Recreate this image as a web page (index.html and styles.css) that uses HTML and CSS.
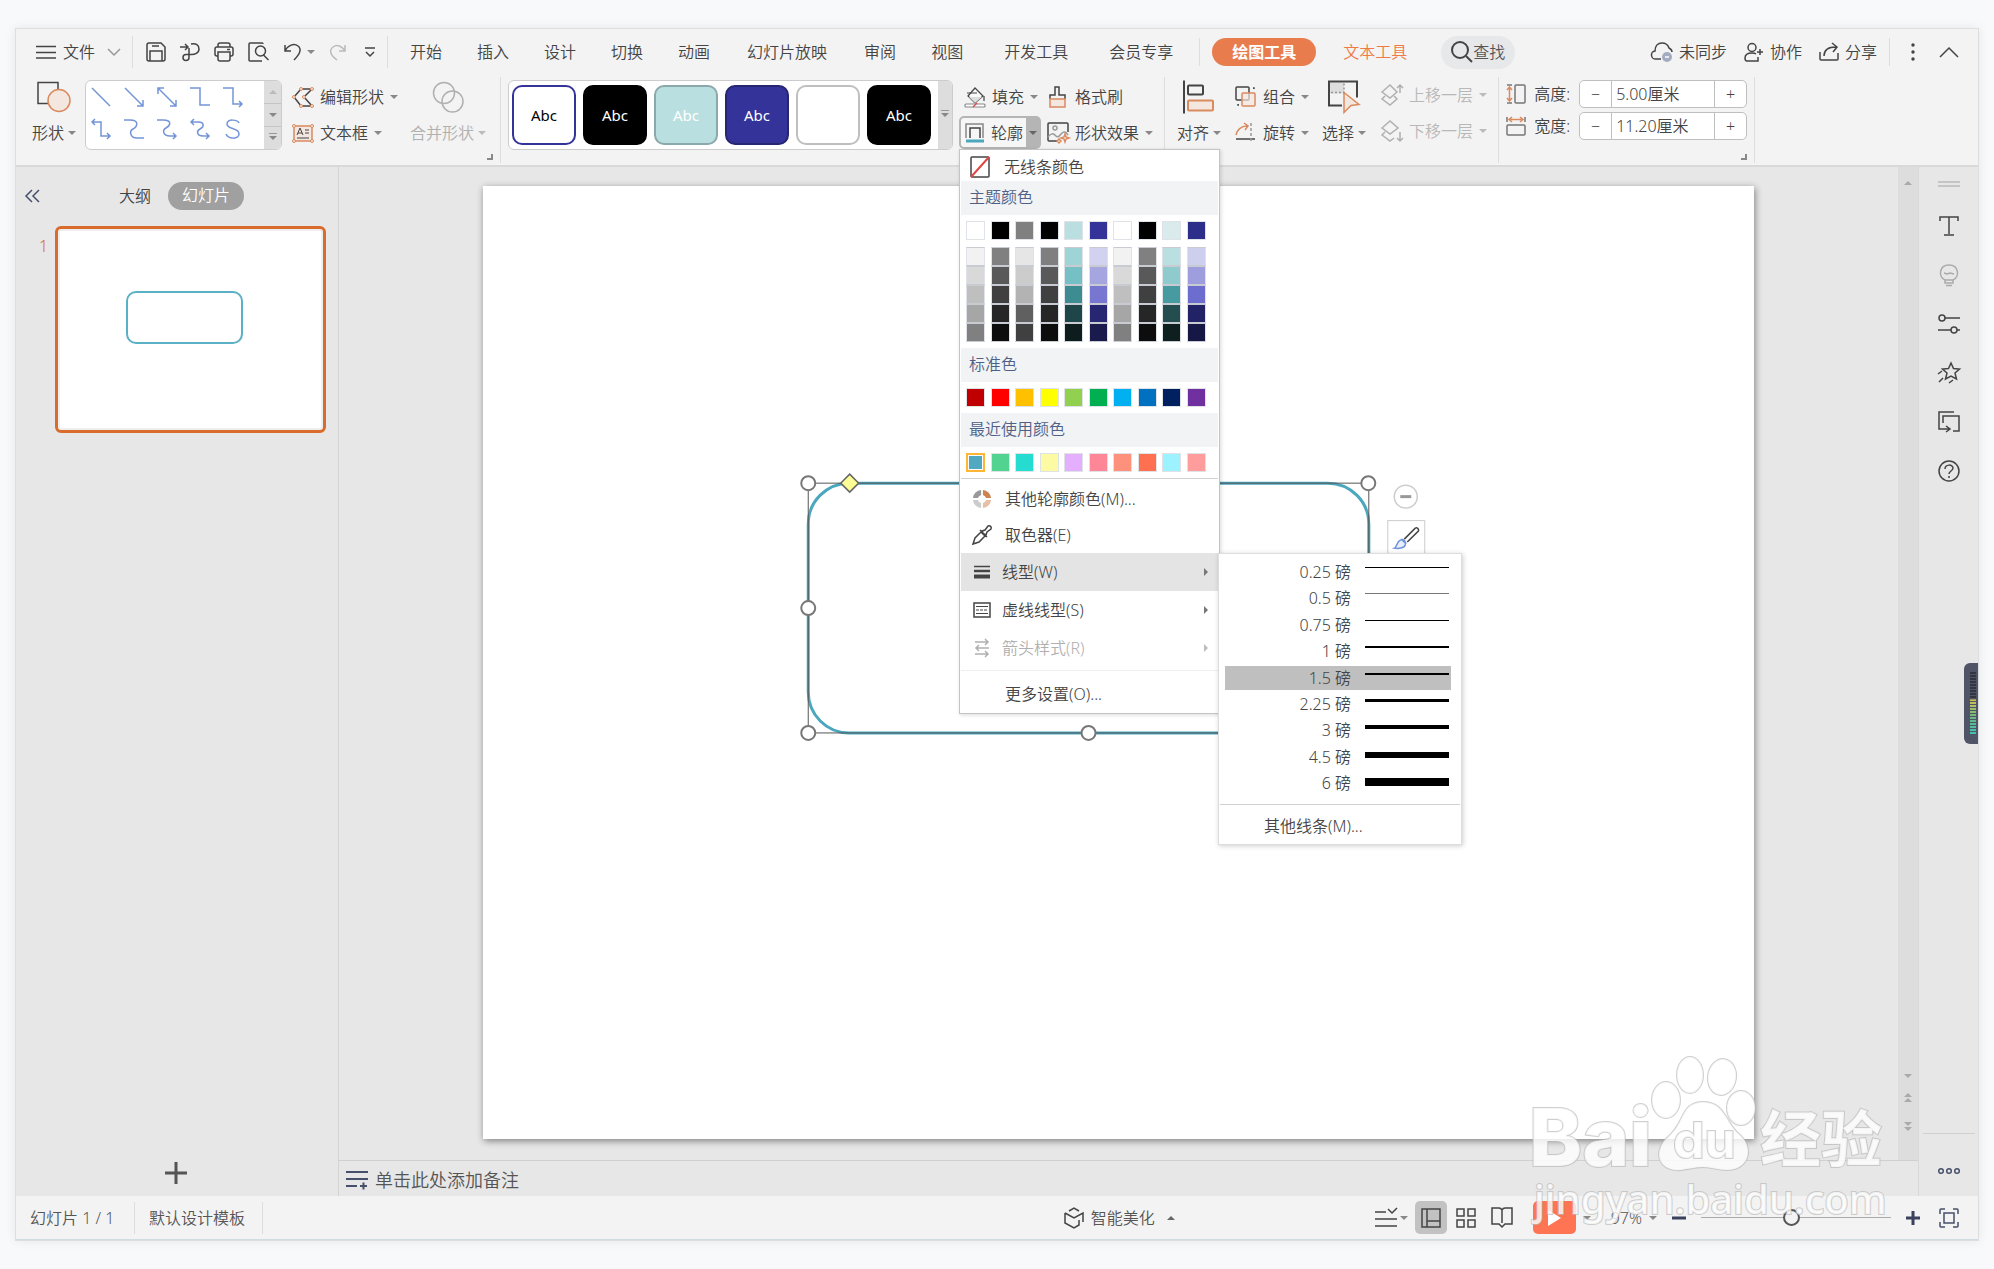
FILE: index.html
```html
<!DOCTYPE html>
<html lang="zh-CN">
<head>
<meta charset="utf-8">
<title>演示文稿</title>
<link rel="stylesheet" href="styles.css">
</head>
<body>
<div class="window">
  <header class="tabbar">
    <button class="file"><svg width="20" height="14" viewBox="0 0 20 14"><path d="M0 1.500h20M0 7.500h20M0 13h20"/></svg><span>文件</span><svg width="14" height="8" viewBox="0 0 14 8" class="soft"><path d="M1 1l6 6 6-6"/></svg></button>
    <i class="vline"></i>
    <div class="quick">
      <button aria-label="保存"><svg width="20" height="20" viewBox="0 0 20 20"><path d="M3 1h12l4 4v12a2 2 0 0 1-2 2H3a2 2 0 0 1-2-2V3a2 2 0 0 1 2-2zM4 19V9h12v10M6 4h7"/></svg></button>
      <button aria-label="导出"><svg width="20" height="20" viewBox="0 0 20 20"><path d="M0 5h8M5 2l3 3-3 3M11 2c5-1 8 1 8 5s-4 6-9 5.500H6a3 3 0 1 0 3 3V6"/></svg></button>
      <button aria-label="打印"><svg width="20" height="20" viewBox="0 0 20 20"><path d="M4 5V3q0-2 2-2h8q2 0 2 2v2M4 14H3q-2 0-2-2V7q0-2 2-2h14q2 0 2 2v5q0 2-2 2h-1M4 10h12v7q0 2-2 2H6q-2 0-2-2zM13 7.500h3"/></svg></button>
      <button aria-label="预览"><svg width="22" height="20" viewBox="0 0 22 20"><path d="M6 19H2q-1 0-1-1V2q0-1 1-1h12q1 0 1 1M6 19h8M15.500 13l5 5"/><circle cx="12.500" cy="9" r="5"/></svg></button>
      <button class="undo" aria-label="撤销"><svg width="18" height="18" viewBox="0 0 18 18"><path d="M1 2v6h6M1 8c3-6 9-8 13-5s2 8-4 14"/></svg><i class="caret"></i></button>
      <button aria-label="重做" class="redo"><svg width="17" height="18" viewBox="0 0 17 18"><path d="M16 2v6h-6M16 8C13 3 8 1 4 4s-3 8 4 13"/></svg></button>
      <button aria-label="自定义"><svg width="12" height="11" viewBox="0 0 12 11"><path d="M1 1h10M2 5l4 4 4-4"/></svg></button>
    </div>
    <i class="vline"></i>
    <nav class="tabs">
      <a href="#">开始</a><a href="#">插入</a><a href="#">设计</a><a href="#">切换</a><a href="#">动画</a><a href="#" class="long">幻灯片放映</a><a href="#">审阅</a><a href="#">视图</a><a href="#" class="wide">开发工具</a><a href="#" class="wide">会员专享</a>
      <i class="vline short"></i>
      <a href="#" class="active">绘图工具</a><a href="#" class="accent">文本工具</a>
    </nav>
    <label class="search"><svg width="22" height="22" viewBox="0 0 22 22"><circle cx="9" cy="9" r="8"/><path d="M15 15l6 6"/></svg><input type="text" placeholder="查找" aria-label="查找"></label>
    <div class="account">
      <button><svg width="22" height="20" viewBox="0 0 22 20"><path d="M10 17H5a4 4 0 0 1-1-8C4 4 7 1 11 1s6 2 7 5c2 1 3 2 3 4"/><circle cx="16" cy="15" r="5" fill="#a3acc0" stroke="none"/><path d="M14 15h4" stroke="#fff"/></svg>未同步</button>
      <button><svg width="20" height="20" viewBox="0 0 20 20"><circle cx="8" cy="5.500" r="4"/><path d="M14 15v4H3q-2 0-2-3c0-4 3-5 7-5 2 0 3 0 4 1M13 10h6M16 7v6"/></svg>协作</button>
      <button><svg width="20" height="20" viewBox="0 0 20 20"><path d="M1 10v7q0 1 1 1h16q1 0 1-1v-6M5 14C5 8 9 5 17 5M13 1l5 4-4 5"/></svg>分享</button>
      <i class="vline short"></i>
      <button class="dots" aria-label="更多"><svg width="4" height="18" viewBox="0 0 4 18"><g fill="#444" stroke="none"><circle cx="2" cy="2" r="1.700"/><circle cx="2" cy="9" r="1.700"/><circle cx="2" cy="16" r="1.700"/></g></svg></button>
      <button class="fold" aria-label="收起"><svg width="20" height="12" viewBox="0 0 20 12"><path d="M1 11l9-9 9 9"/></svg></button>
    </div>
  </header>

  <section class="ribbon">
    <button class="big"><svg width="34" height="31" viewBox="0 0 34 31"><path d="M12 22H1V1h20v8"/><circle cx="22" cy="19" r="11" class="or"/></svg><span>形状<i class="caret"></i></span></button>
    <div class="gallery lines">
      <div class="shapes">
        <svg viewBox="0 0 20 20"><path d="M1 1l18 18"/></svg>
        <svg viewBox="0 0 20 20"><path d="M1 1l18 18M19 13v6h-6"/></svg>
        <svg viewBox="0 0 20 20"><path d="M1 1l18 18M19 13v6h-6M1 7V1h6"/></svg>
        <svg viewBox="0 0 20 20"><path d="M0 1h10v17h10"/></svg>
        <svg viewBox="0 0 20 20"><path d="M0 1h10v16h9M16 14l3 3-3 3"/></svg>
        <svg viewBox="0 0 20 20"><path d="M4 0L1 3l3 3M1 3h9v14h9M16 14l3 3-3 3"/></svg>
        <svg viewBox="0 0 20 20"><path d="M0 1h6c10 0 7 7 3 9s-3 9 4 9h7"/></svg>
        <svg viewBox="0 0 20 20"><path d="M0 1h6c10 0 7 6 3 8s-3 8 4 8h6M16 14l3 3-3 3"/></svg>
        <svg viewBox="0 0 20 20"><path d="M4 0L1 3l3 3M1 3h7c7 0 6 5 2 7s-3 7 3 7h6M16 14l3 3-3 3"/></svg>
        <svg viewBox="0 0 20 20"><path d="M16 4c-1-3-12-5-12 1s12 3 12 10c0 6-11 5-13 0"/></svg>
      </div>
      <div class="scroller"><button aria-label="上" disabled><i class="caret up"></i></button><button aria-label="下"><i class="caret"></i></button><button aria-label="全部"><i class="caret bar"></i></button></div>
    </div>
    <div class="stack edit">
      <button class="tool"><svg width="22" height="21" viewBox="0 0 22 21"><path d="M9 2h11l-8 8 8 9H9L2 10z"/><g class="pt"><circle cx="9" cy="2" r="1.500"/><circle cx="20" cy="2" r="1.500"/><circle cx="12" cy="10" r="1.500"/><circle cx="20" cy="19" r="1.500"/><circle cx="9" cy="19" r="1.500"/><circle cx="2" cy="10" r="1.500"/></g></svg>编辑形状<i class="caret"></i></button>
      <button class="tool"><svg width="22" height="19" viewBox="0 0 22 19"><path class="or" d="M2 2h18v15H2z"/><path stroke-width="1" d="M5 11l3-7 3 7M6 9h4M13 6h4M13 9h4M5 14h12" /><g class="pt"><circle cx="2" cy="2" r="1.500"/><circle cx="20" cy="2" r="1.500"/><circle cx="2" cy="17" r="1.500"/><circle cx="20" cy="17" r="1.500"/></g></svg>文本框<i class="caret"></i></button>
    </div>
    <button class="big merge" disabled><svg width="32" height="32" viewBox="0 0 32 32"><circle cx="12" cy="12" r="10.500"/><circle cx="20.500" cy="20.500" r="10.500"/></svg><span>合并形状<i class="caret"></i></span></button>
    <i class="corner"></i>
    <i class="vline tall"></i>
    <div class="gallery styles">
      <button class="st s1">Abc</button><button class="st s2">Abc</button><button class="st s3">Abc</button><button class="st s4">Abc</button><button class="st s5" aria-label="白色"></button><button class="st s2">Abc</button>
      <div class="scroller"><button aria-label="全部"><i class="caret bar"></i></button></div>
    </div>
    <div class="stack fillcol">
      <button class="tool fill"><svg width="22" height="22" viewBox="0 0 22 22"><g stroke-width="1.200"><path d="M4 10l7-8 8 8-8 7z" fill="#fafafa"/><path d="M5 11h13l-7 6z" fill="#ddd" stroke="none"/><path d="M3 7h10M20 10v5"/><rect x="1" y="18" width="20" height="3" rx="1" fill="#fff" stroke="#888"/><path d="M9 21l4-4" stroke="#e04545"/></g></svg>填充<i class="caret"></i></button>
      <div class="outline">
        <button class="outline-main"><svg width="20" height="20" viewBox="0 0 20 20"><path stroke="#888" d="M1 15V1h17v14"/><path d="M5 15V5h10v10"/><path d="M1 18h18" stroke="#4ba7be" stroke-width="3"/></svg>轮廓</button><button class="outline-drop" aria-label="轮廓选项"><i class="caret"></i></button>
        <div class="menu">
          <button class="row none"><svg width="20" height="22" viewBox="0 0 20 22"><rect x="1" y="1" width="18" height="20" rx="1"/><path d="M1 21L19 1" stroke="#e04545" stroke-width="2"/></svg>无线条颜色</button>
          <h3>主题颜色</h3>
          <div class="swatches">
            <b style="background:#fff"></b><b style="background:#000"></b><b style="background:#808080"></b><b style="background:#000"></b><b style="background:#badfe1"></b><b style="background:#339"></b><b style="background:#fff"></b><b style="background:#000"></b><b style="background:#daebed"></b><b style="background:#2d2d8a"></b>
          </div>
          <div class="swatches tints">
            <b style="background:#f2f2f2"></b><b style="background:#808080"></b><b style="background:#e6e6e6"></b><b style="background:#7f7f7f"></b><b style="background:#9fd4d7"></b><b style="background:#d2d2f0"></b><b style="background:#f2f2f2"></b><b style="background:#808080"></b><b style="background:#badfe1"></b><b style="background:#ceceef"></b>
            <b style="background:#d9d9d9"></b><b style="background:#595959"></b><b style="background:#ccc"></b><b style="background:#595959"></b><b style="background:#75c0c5"></b><b style="background:#a5a5e0"></b><b style="background:#d9d9d9"></b><b style="background:#595959"></b><b style="background:#8fcacd"></b><b style="background:#9e9edf"></b>
            <b style="background:#bfbfbf"></b><b style="background:#404040"></b><b style="background:#b3b3b3"></b><b style="background:#404040"></b><b style="background:#3c8c92"></b><b style="background:#7777d1"></b><b style="background:#bfbfbf"></b><b style="background:#404040"></b><b style="background:#479a9f"></b><b style="background:#6d6dcf"></b>
            <b style="background:#a6a6a6"></b><b style="background:#262626"></b><b style="background:#606060"></b><b style="background:#262626"></b><b style="background:#1e4649"></b><b style="background:#262673"></b><b style="background:#a6a6a6"></b><b style="background:#262626"></b><b style="background:#244d4f"></b><b style="background:#222267"></b>
            <b style="background:#808080"></b><b style="background:#0d0d0d"></b><b style="background:#404040"></b><b style="background:#0d0d0d"></b><b style="background:#0d1c1d"></b><b style="background:#1a1a4d"></b><b style="background:#808080"></b><b style="background:#0d0d0d"></b><b style="background:#0e1f20"></b><b style="background:#171745"></b>
          </div>
          <h3>标准色</h3>
          <div class="swatches">
            <b style="background:#c00000"></b><b style="background:#f00"></b><b style="background:#ffc000"></b><b style="background:#ff0"></b><b style="background:#92d050"></b><b style="background:#00b050"></b><b style="background:#00b0f0"></b><b style="background:#0070c0"></b><b style="background:#002060"></b><b style="background:#7030a0"></b>
          </div>
          <h3>最近使用颜色</h3>
          <div class="swatches">
            <b class="chosen" style="background:#50a9c0"></b><b style="background:#53d390"></b><b style="background:#26dbd0"></b><b style="background:#fcfaa3"></b><b style="background:#e3affe"></b><b style="background:#fe8797"></b><b style="background:#fe917c"></b><b style="background:#ff7051"></b><b style="background:#9cf2ff"></b><b style="background:#ff9d9d"></b>
          </div>
          <hr>
          <button class="row"><svg width="22" height="22" viewBox="0 0 22 22" class="wheel"><path d="M10 1a10 10 0 0 0-9 9h5.500a5 5 0 0 1 3.500-3.500z" fill="#999"/><path d="M12 1a10 10 0 0 1 9 9h-5.500A5 5 0 0 0 12 6.500z" fill="#cd8450"/><path d="M10 21a10 10 0 0 1-9-9h5.500a5 5 0 0 0 3.500 3.500z" fill="#ccc"/><path d="M12 21a10 10 0 0 0 9-9h-5.500a5 5 0 0 1-3.500 3.500z" fill="#e6bfa5"/></svg>其他轮廓颜色(M)...</button>
          <button class="row"><svg width="20" height="20" viewBox="0 0 20 20"><path d="M1 19l2-6 6-6 4 4-6 6-6 2zM8 5l7 7M11 8l-1-2 3-1 3-4c2-1 4 1 3 3l-4 3-1 3-2-1"/></svg>取色器(E)</button>
          <div class="sub">
            <button class="row deep on"><svg width="18" height="14" viewBox="0 0 18 14"><path d="M1 1.500h16" stroke-width="1.500"/><path d="M1 6h16" stroke-width="2.500"/><path d="M1 11.500h16" stroke-width="4"/></svg>线型(W)<i class="arrow"></i></button>
            <div class="submenu">
              <div class="weights">
                <button class="weight">0.25 磅<i style="height:1px"></i></button>
                <button class="weight">0.5 磅<i class="grey" style="height:1px"></i></button>
                <button class="weight">0.75 磅<i style="height:1px"></i></button>
                <button class="weight">1 磅<i style="height:2px"></i></button>
                <button class="weight on">1.5 磅<i style="height:2px"></i></button>
                <button class="weight">2.25 磅<i style="height:3px"></i></button>
                <button class="weight">3 磅<i style="height:4px"></i></button>
                <button class="weight">4.5 磅<i style="height:6px"></i></button>
                <button class="weight">6 磅<i style="height:8px"></i></button>
              </div>
              <hr>
              <button class="other">其他线条(M)...</button>
            </div>
          </div>
          <button class="row deep"><svg width="18" height="16" viewBox="0 0 18 16"><rect x="1" y="1" width="16" height="14"/><path d="M3 4.500h12M3 11.500h12" stroke-width="1"/><path d="M3 8h12" stroke-width="1" stroke-dasharray="3 1"/></svg>虚线线型(S)<i class="arrow"></i></button>
          <button class="row deep" disabled><svg width="18" height="18" viewBox="0 0 18 18"><path d="M2 3h13M12 0l3 3-3 3M16 9H3M6 6L3 9l3 3M2 15h13M12 12l3 3-3 3"/></svg>箭头样式(R)<i class="arrow"></i></button>
          <hr class="faint">
          <button class="row last">更多设置(O)...</button>
        </div>
      </div>
    </div>
    <div class="stack fmt">
      <button class="tool"><svg width="22" height="22" viewBox="0 0 22 22"><path d="M3 13V9h5V1h4v8h6v4"/><path class="or" d="M3 13h15v8H3z"/></svg>格式刷</button>
      <button class="tool"><svg width="22" height="22" viewBox="0 0 22 22"><path d="M10 19H2q-1 0-1-1V2q0-1 1-1h18q1 0 1 1v8"/><g stroke="#999"><circle cx="8" cy="6" r="2"/><path d="M1 15c3-4 5-4 8-1s5-4 8-4 3 2 4 3"/></g><path class="or" d="M18 12l1 3 3 1-3 1-1 3-1-3-3-1 3-1zM12 17l2 2-2 2-2-2z"/></svg>形状效果<i class="caret"></i></button>
    </div>
    <i class="vline tall"></i>
    <button class="big align"><svg width="32" height="33" viewBox="0 0 32 33"><path d="M1 0v33" stroke-width="2"/><rect x="5" y="5" width="15" height="9" rx="1" stroke-width="2"/><rect x="5" y="20" width="25" height="10" rx="1" class="or" stroke-width="2"/></svg><span>对齐<i class="caret"></i></span></button>
    <div class="stack grp">
      <button class="tool"><svg width="22" height="22" viewBox="0 0 22 22"><rect x="1" y="1" width="13" height="13" rx="1"/><rect x="7" y="7" width="13" height="13" rx="1" class="or" fill-opacity=".7"/><path d="M18 2h1v2M3 18v1h2" stroke-dasharray="2 1"/></svg>组合<i class="caret"></i></button>
      <button class="tool"><svg width="22" height="22" viewBox="0 0 22 22"><path d="M1 17h19"/><path d="M16 1v20" stroke="#999" stroke-dasharray="3 2"/><path class="or nofill" d="M1 13C2 8 6 4 12 4M9 1l4 3-3 4"/></svg>旋转<i class="caret"></i></button>
    </div>
    <button class="big select"><svg width="32" height="33" viewBox="0 0 32 33"><path d="M2 2h14v11H2z" fill="#ddd" stroke="none"/><path d="M14 25H1V1h28v16" stroke-width="2"/><path d="M16 3v10M3 12h13" stroke="#999" stroke-dasharray="2 2"/><path class="or" d="M16 12l15 12-8 1-7 7z"/></svg><span>选择<i class="caret"></i></span></button>
    <div class="stack layer">
      <button class="tool" disabled><svg width="22" height="22" viewBox="0 0 22 22"><path d="M1 8l8-7 7 7-7 6zM4 12l-3 3 8 6 7-6-3-3M19 9V1M16 4l3-3 3 3"/></svg>上移一层<i class="caret"></i></button>
      <button class="tool" disabled><svg width="22" height="22" viewBox="0 0 22 22"><path d="M1 8l8-7 8 7-8 6zM4 12l-3 3 8 6 4-3M19 12v9M16 18l3 3 3-3"/></svg>下移一层<i class="caret"></i></button>
    </div>
    <i class="vline tall"></i>
    <div class="sizes">
      <div class="size"><svg width="20" height="20" viewBox="0 0 20 20"><rect x="9" y="1" width="10" height="18" rx="1" stroke="#777"/><path stroke="#777" d="M1 1h5M1 19h5"/><path class="or nofill" d="M3.500 3v14M1 6l2.500-3L6 6M1 14l2.500 3L6 14"/></svg><label for="h">高度:</label><div class="spin"><button aria-label="减">−</button><input id="h" type="text" value="5.00厘米"><button aria-label="加">+</button></div></div>
      <div class="size"><svg width="20" height="20" viewBox="0 0 20 20"><rect x="1" y="9" width="18" height="10" rx="1" stroke="#777"/><path stroke="#777" d="M1 1v5M19 1v5"/><path class="or nofill" d="M3 3.500h14M6 1L3 3.500 6 6M14 1l3 2.500L14 6"/></svg><label for="w">宽度:</label><div class="spin"><button aria-label="减">−</button><input id="w" type="text" value="11.20厘米"><button aria-label="加">+</button></div></div>
    </div>
    <i class="corner"></i>
    <i class="vline tall"></i>
  </section>

  <main class="work">
    <aside class="panel">
      <div class="panel-head"><button aria-label="折叠"><svg width="16" height="14" viewBox="0 0 16 14" class="navy"><path stroke-width="1.500" d="M7 1L1 7l6 6M14 1L8 7l6 6"/></svg></button><a href="#" class="outline-tab">大纲</a><a href="#" class="slides-tab">幻灯片</a></div>
      <div class="thumb-row"><span>1</span><button class="thumb" aria-label="幻灯片 1"><svg viewBox="0 0 265 201"><rect x="69" y="63" width="115" height="51" rx="9"/></svg></button></div>
      <button class="add" aria-label="新建幻灯片"><svg width="22" height="22" viewBox="0 0 22 22"><path d="M11 0v22M0 11h22"/></svg></button>
    </aside>
    <div class="center">
      <div class="stage">
        <div class="canvas">
          <div class="slide">
            <svg viewBox="0 0 1272 953">
              <rect x="325.500" y="297" width="561" height="250" rx="41" class="shape"/>
              <path class="frame" d="M325.500 297h561v250h-561z"/>
              <g class="handle"><circle cx="325.500" cy="297" r="7"/><circle cx="325.500" cy="422" r="7"/><circle cx="325.500" cy="547" r="7"/><circle cx="606" cy="547" r="7"/><circle cx="886" cy="297" r="7"/></g>
              <path class="adjust" d="M367 288l9 9-9 9-9-9z"/>
              <circle cx="923.500" cy="310.500" r="11.500" class="collapse"/><path d="M918 310.500h11" class="dash"/>
              <g class="brush"><rect x="905.500" y="334.500" width="37" height="40"/><path class="stick" d="M922 353l11-11q2-1 3 1t-1 3l-10 10"/><path class="tip" d="M912 362c3-1 2-6 6-8s6 2 5 5-7 4-11 3zM919 353l5 5"/></g>
            </svg>
          </div>
        </div>
        <div class="vscroll"><i class="caret up"></i><i class="caret end"></i><i class="double up2"></i><i class="double"></i></div>
      </div>
      <div class="notes"><svg width="22" height="20" viewBox="0 0 22 20" class="navy"><path d="M0 2h22M0 9h22M0 16h11M14 16h7M17.500 12.500v7"/></svg>单击此处添加备注</div>
    </div>
    <aside class="side">
      <svg width="22" height="6" viewBox="0 0 22 6" class="grip"><path d="M0 1h22M0 5h22"/></svg>
      <button aria-label="文本"><svg width="22" height="22" viewBox="0 0 22 22"><path d="M2 6V2h18v4M11 2v17M6 20h10"/></svg></button>
      <button aria-label="灵感" class="dim"><svg width="22" height="22" viewBox="0 0 22 22"><path d="M7 16C0 13 1 1 11 1s11 12 4 15zM7 16v3h8v-3M8 21.500h6M6 9l3 1 3-1 4 1"/></svg></button>
      <button aria-label="属性"><svg width="22" height="22" viewBox="0 0 22 22"><circle cx="4" cy="5" r="3"/><path d="M7 5h15M0 17h13M19 17h3"/><circle cx="16" cy="17" r="3"/></svg></button>
      <button aria-label="动画"><svg width="22" height="22" viewBox="0 0 22 22"><path d="M13 1l2.500 5.500 6 .5-4.500 4 1.500 6-5.500-3-5.500 3L9 11 4.500 7l6-.5zM0 12l4-3M1 20l4-4M11 21l4-3"/></svg></button>
      <button aria-label="切换"><svg width="22" height="22" viewBox="0 0 22 22"><path d="M16 1H1v17h10M8 15l4 3-4 3M5 12V5h16v15h-6"/></svg></button>
      <button aria-label="帮助"><svg width="22" height="22" viewBox="0 0 22 22"><circle cx="11" cy="11" r="10"/><path d="M7 9c0-5 8-5 8-1 0 3-4 3-4 6M11 16v2"/></svg></button>
      <div class="meter"><i></i></div>
      <button class="more" aria-label="更多"><svg width="22" height="8" viewBox="0 0 22 8" class="navy"><circle cx="3" cy="4" r="2.300"/><circle cx="11" cy="4" r="2.300"/><circle cx="19" cy="4" r="2.300"/></svg></button>
    </aside>
  </main>

  <footer class="status">
    <span class="count">幻灯片 1 / 1</span><span class="tpl">默认设计模板</span>
    <button class="beauty"><svg width="20" height="22" viewBox="0 0 20 22"><path d="M5 4l5-3 5 3M1 6l9 5 9-5v9M1 6v10l9 5 5-3v-5"/></svg>智能美化<i class="caret up"></i></button>
    <div class="views">
      <button aria-label="备注"><svg width="22" height="20" viewBox="0 0 22 20"><path d="M0 4h11M0 11h22M0 18h22M13 1l4 4 5-5"/></svg><i class="caret"></i></button>
      <button class="on" aria-label="普通"><svg width="20" height="20" viewBox="0 0 20 20"><path d="M1 1h18v18H1zM6 1v18M6 13h13"/></svg></button>
      <button aria-label="浏览"><svg width="20" height="20" viewBox="0 0 20 20"><path d="M1 1h7v7H1zM12 1h7v7h-7zM1 12h7v7H1zM12 12h7v7h-7z"/></svg></button>
      <button aria-label="阅读"><svg width="22" height="21" viewBox="0 0 22 21"><path d="M11 2v14M11 3Q10 1 8 1H1v16h7l3 3 3-3h7V1h-7q-2 0-3 2"/></svg></button>
      <button class="play" aria-label="放映"><svg width="13" height="16" viewBox="0 0 13 16"><path d="M0 0l13 8-13 8z"/></svg></button>
      <button class="play-more" aria-label="放映选项"><i class="caret"></i></button>
      <button class="pct">97%<i class="caret"></i></button>
      <button aria-label="缩小"><svg width="14" height="14" viewBox="0 0 14 14" class="thick"><path d="M0 7h14"/></svg></button>
      <input type="range" min="10" max="194" value="97" aria-label="缩放">
      <button aria-label="放大"><svg width="14" height="14" viewBox="0 0 14 14" class="thick"><path d="M0 7h14M7 0v14"/></svg></button>
      <button class="fit" aria-label="适应窗口"><svg width="20" height="20" viewBox="0 0 20 20" class="navy"><path stroke-width="1.500" d="M1 6V2q0-1 1-1h4M14 1h4q1 0 1 1v4M19 14v4q0 1-1 1h-4M6 19H2q-1 0-1-1v-4M5 5h10v10H5z"/></svg></button>
    </div>
  </footer>
</div>
<svg class="watermark" width="370" height="190" viewBox="0 0 370 190">
  <g class="wm">
    <ellipse cx="144" cy="51" rx="14" ry="18"/><ellipse cx="168" cy="26" rx="13" ry="18"/><ellipse cx="200" cy="28" rx="14" ry="18" transform="rotate(8 200 28)"/><ellipse cx="219" cy="59" rx="14" ry="17"/>
    <path d="M181 53c-22 0-18 20-34 34-18 16-10 36 12 34 8-1 14-3 22-3s14 3 24 3c22 0 28-22 12-36-14-12-14-32-36-32z"/>
    <text x="7" y="117" class="bai">Bai</text><text x="151" y="109" class="du">du</text><text x="238" y="113" class="jy">经验</text>
    <text x="12" y="165" class="url">jingyan.baidu.com</text>
  </g>
</svg>
</body>
</html>
```
FILE: styles.css
```css
* { box-sizing: border-box; }
body {
  margin: 0;
  padding: 28px 15px;
  min-height: 100vh;
  display: flex;
  background: #f7f9fb;
  color: #444;
  font: 350 16px/24px "Noto Sans", "Noto Sans CJK SC", sans-serif;
  position: relative;
}
button, input { font: inherit; color: inherit; background: none; border: 0; padding: 0; margin: 0; }
button { display: flex; align-items: center; white-space: nowrap; }
button:disabled { color: #b0b0b0; }
button:disabled svg { stroke: #b0b0b0; }
a { color: inherit; text-decoration: none; }
svg { display: block; flex: none; fill: none; stroke: #444; stroke-width: 1.5; overflow: visible; }
svg.navy { stroke: #47506b; stroke-width: 2; }
svg.soft { stroke: #999; }
svg .or { stroke: #d98b5f; fill: #f3e7e0; }
svg .nofill { fill: none; }
.pt { fill: #f3e7e0; stroke: #d98b5f; stroke-width: 1; }

.window {
  flex: 1;
  min-width: 0;
  display: flex;
  flex-direction: column;
  border: 1px solid #dedede;
  background: #f3f3f3;
  box-shadow: 0 0 10px rgba(0, 0, 0, .08);
}

.caret { flex: none; width: 0; height: 0; border: 4px solid transparent; border-top-color: #888; border-bottom: 0; }
.caret.up { border: 4px solid transparent; border-bottom-color: #888; border-top: 0; }
.caret.bar { position: relative; }
.caret.bar::before { content: ""; position: absolute; left: -4px; top: -7px; width: 8px; height: 1px; background: #999; }
button:disabled .caret { border-top-color: #bbb; }
button:disabled .caret.up { border-bottom-color: #bbb; }
.vline { flex: none; width: 1px; height: 32px; background: #ddd; }
.vline.short { height: 28px; }
.vline.tall { height: 86px; align-self: flex-start; }
.corner { flex: none; width: 6px; height: 6px; border: solid #888; border-width: 0 2px 2px 0; margin: 77px 7px 0 1px; }

/* tab bar */
.tabbar { height: 48px; display: flex; align-items: center; padding: 0 19px 2px 20px; }
.file span { margin: 0 12px 0 7px; }
.file { margin-right: 11px; }
.quick { display: flex; align-items: center; gap: 14px; margin: 0 11px 0 13px; }
.undo { gap: 5px; }
.redo svg { stroke: #bbb; }
.quick .redo { margin-right: 4px; }
.tabs { display: flex; align-items: center; gap: 35px; margin-left: 22px; }
.tabs .long { padding: 0 2px; }
.tabs .wide { margin-left: 6px; }
.tabs .vline { margin: 0 -23px 0 -9px; }
.tabs .active {
  height: 28px;
  line-height: 28px;
  border-radius: 14px;
  padding: 0 20px;
  background: #e87c4c;
  color: #fff;
  font-weight: 700;
  margin-right: -8px;
}
.tabs .accent { color: #ef7a45; }
.search { display: flex; align-items: center; height: 33px; width: 74px; margin-left: 34px; padding-left: 10px; border-radius: 17px; background: #e7e8ea; }
.search input { width: 34px; height: 30px; }
.search input::placeholder { color: #555; opacity: 1; }
.search svg { stroke-width: 2; }
.account { margin-left: auto; display: flex; align-items: center; gap: 17px; }
.account button { gap: 6px; }
.account .vline { margin: 0 4px 0 -5px; }
.account .dots { margin-right: 7px; }

/* ribbon */
.ribbon { height: 90px; display: flex; align-items: flex-start; padding-left: 16px; border-bottom: 2px solid #d9d9d9; }
.stack { display: flex; flex-direction: column; margin-top: 2px; }
.tool { height: 36px; gap: 6px; }
.big { flex-direction: column; margin-top: 2px; }
.big svg { height: 36px; }
.big span { display: flex; align-items: center; height: 36px; gap: 4px; }
.gallery { display: flex; height: 70px; margin-top: 3px; border: 1px solid #ccc; border-radius: 6px; background: #fff; overflow: hidden; }
.lines { width: 197px; margin-left: 9px; }
.shapes { flex: 1; display: grid; grid-template-columns: repeat(5, 20px); grid-auto-rows: 20px; gap: 12px 13px; padding: 6px 5px; }
.shapes svg { stroke: #7395d8; }
.scroller { width: 17px; display: flex; flex-direction: column; background: #ddd; margin-left: auto; }
.scroller button { flex: 1; justify-content: center; }
.scroller button + button { border-top: 1px solid #c4c4c4; }
.edit { margin-left: 10px; }
.merge { margin-left: 12px; }
.styles { width: 445px; margin-left: 7px; gap: 7px; padding-left: 3px; align-items: center; }
.styles .scroller { align-self: stretch; }
.st { width: 64px; height: 60px; border-radius: 10px; justify-content: center; flex: none; border: 2px solid #000; font: 400 15px/20px "Noto Sans", sans-serif; }
.s1 { border-color: #339; color: #000; }
.s2 { background: #000; color: #fff; }
.s3 { background: #badfe1; border-color: #8ba9ab; color: #fff; }
.s4 { background: #339; border-color: #262673; color: #fff; }
.s5 { border-color: #bfbfbf; }
.fillcol { margin-left: 6px; }
.fill { padding-left: 5px; }
.outline { position: relative; display: flex; width: 82px; height: 33px; margin-top: 1px; border: 2px solid #b5b5b5; border-radius: 5px; background: #b5b5b5; }
.outline-main { background: #f6f6f6; gap: 6px; padding-left: 4px; width: 65px; border-radius: 3px 0 0 3px; }
.outline-drop { flex: 1; justify-content: center; }
.outline-drop .caret { border-top-color: #666; }
.fmt { margin-left: 6px; }
.fmt .caret { margin-right: 11px; }
.align { margin-left: 12px; }
.grp { margin-left: 14px; }
.select { margin-left: 13px; }
.layer { margin: 0 11px 0 15px; }
.layer .tool { color: #b8b8b8; }
.sizes { display: flex; flex-direction: column; gap: 4px; margin: 3px 0 0 7px; }
.sizes + .corner { margin-left: -6px; }
.size { display: flex; align-items: center; }
.size label { width: 45px; margin-left: 8px; }
.spin { display: flex; width: 168px; height: 28px; border: 1px solid #bfbfbf; border-radius: 5px; background: #fff; }
.spin button { width: 31px; justify-content: center; }
.spin input { flex: 1; min-width: 0; padding-left: 4px; border: solid #bfbfbf; border-width: 0 1px; }

/* outline menu */
.menu { position: absolute; z-index: 5; left: -2px; top: 31px; width: 261px; background: #fff; border: 1px solid #c4c4c4; padding: 0 1px; box-shadow: 1px 1px 4px rgba(0, 0, 0, .15); }
.menu h3 { margin: 0; height: 34px; padding-left: 8px; font: inherit; line-height: 32px; color: #4f5f85; background: #f1f3f5; }
.menu hr { border: 0; height: 1px; margin: 3px 0 2px; background: #d0d0d0; }
.menu hr.faint { margin: 3px 0 4px; background: #eee; }
.row { width: 100%; height: 36px; padding-left: 11px; gap: 13px; }
.row svg { width: 20px; }
.row.none { height: 31px; padding: 2px 0 0 9px; gap: 14px; }
.row.deep { height: 38px; gap: 10px; }
.row.on { background: #e4e4e4; }
.row.last { height: 38px; padding-left: 44px; }
.wheel { stroke: none; }
.arrow { margin-left: auto; margin-right: 10px; border: 4px solid transparent; border-left-color: #777; border-right: 0; }
button:disabled .arrow { border-left-color: #bbb; }
.swatches { display: grid; grid-template-columns: repeat(10, 19px); justify-content: space-between; width: 240px; margin: 6px 5px; }
.swatches b { height: 19px; border: 1px solid #dfe3e8; }
.swatches b.chosen { border: 2px solid #ffb635; box-shadow: inset 0 0 0 1px #fff; }
.swatches.tints { margin-top: 7px; }
.tints b { border-top-color: #c8ccd2; border-bottom-color: #c8ccd2; }
.sub { position: relative; }
.submenu { position: absolute; z-index: 6; left: 257px; top: 0; width: 244px; padding: 6px 1px 1px; background: #fff; border: 1px solid #ddd; box-shadow: 1px 1px 5px rgba(0, 0, 0, .2); }
.weights { display: flex; flex-direction: column; justify-content: space-between; height: 235px; }
.weight { width: 226px; height: 24px; margin: 0 5px; padding-right: 2px; justify-content: flex-end; line-height: 24px; }
.weight i { width: 84px; margin-left: 14px; background: #000; align-self: flex-start; margin-top: 7px; }
.weight .grey { background: #777; }
.weight.on { background: #bfbfbf; }
.menu .submenu hr { margin: 9px 0 4px; }
.other { height: 34px; padding-left: 44px; }

/* work area */
.work { flex: 1; display: flex; background: #e7e7e7; min-height: 0; }
.panel { width: 323px; flex: none; display: flex; flex-direction: column; border-right: 1px solid #d4d4d4; }
.panel-head { display: flex; align-items: center; height: 59px; padding: 0 0 2px 9px; }
.outline-tab { margin: 0 17px 0 78px; }
.slides-tab { height: 28px; line-height: 27px; padding: 0 14px; border-radius: 14px; background: #a0a0a0; color: #fff; }
.thumb-row { display: flex; padding-left: 23px; gap: 7px; }
.thumb-row span { width: 9px; margin-top: 8px; color: #d96c2c; }
.thumb { width: 271px; border: 3px solid #d96c2c; border-radius: 6px; background: #fff; box-shadow: inset 0 0 0 2px #eee; }
.thumb svg { width: 100%; stroke: #5ab0c5; stroke-width: 2; }
.add { margin: auto auto 12px 149px; }
.add svg { stroke: #555; stroke-width: 3; }
.center { flex: 1; display: flex; flex-direction: column; min-width: 0; }
.stage { flex: 1; display: flex; }
.canvas { flex: 1; display: flex; padding: 19px 144px 21px; }
.slide { flex: 1; background: #fff; box-shadow: 1px 2px 7px rgba(0, 0, 0, .45); }
.slide svg { width: 100%; height: 100%; }
.shape { stroke: #4ba7be; stroke-width: 3; }
.frame { stroke: #555; stroke-width: 1; }
.handle { fill: #fff; stroke: #777; stroke-width: 2; }
.adjust { fill: #fdfd96; stroke: #666; stroke-width: 1.5; }
.collapse { stroke: #ccc; fill: #fff; }
.dash { stroke: #999; stroke-width: 3; }
.brush rect { fill: #fff; stroke: #ccc; stroke-width: 1; }
.tip { stroke: #6e92dc; fill: #e8eefa; }
.vscroll { width: 20px; display: flex; flex-direction: column; align-items: center; padding: 14px 0 34px; background: #ddd; }
.vscroll .caret { border-top-color: #aaa; border-bottom-color: #aaa; }
.vscroll .caret.end { margin-top: auto; border-bottom-color: transparent; }
.double { position: relative; border: 4px solid transparent; border-top-color: #aaa; border-bottom: 0; margin: 16px 0 0; }
.double::after { content: ""; position: absolute; left: -4px; top: 1px; border: 4px solid transparent; border-top-color: #aaa; border-bottom: 0; }
.double.up2 { transform: rotate(180deg); margin: 20px 0 4px; }
.notes { height: 36px; display: flex; align-items: center; gap: 7px; padding: 2px 0 0 7px; border-top: 1px solid #d0d0d0; color: #555; font-size: 18px; }
.side { position: relative; width: 60px; display: flex; flex-direction: column; align-items: center; border-left: 1px solid #d8d8d8; }
.side > button { height: 22px; margin-bottom: 27px; }
.grip { margin: 14px 0 28px; stroke: #bbb; }
.dim svg { stroke: #aaa; }
.meter { position: absolute; right: 0; top: 496px; width: 14px; height: 81px; padding: 9px 0 9px 6px; border-radius: 6px 0 0 6px; background: #4f5566; }
.meter i { display: block; width: 6px; height: 63px; background: repeating-linear-gradient(transparent 0 2px, #4f5566 2px 3px), linear-gradient(#33363f 43%, #d3c355 44%, #6fb77e 70%, #3cc3b6); }
.side > .more { margin: auto 0 0; width: 52px; height: 63px; padding-top: 12px; justify-content: center; align-items: center; border-top: 1px solid #d0d0d0; }
.more svg.navy { stroke-width: 1.5; }

/* status bar */
.status { height: 44px; display: flex; align-items: center; color: #555; border-bottom: 1px solid #cfdde2; }
.count, .tpl { line-height: 32px; padding: 0 14px; border-right: 1px solid #ddd; }
.count { width: 119px; white-space: nowrap; }
.tpl { width: 128px; }
.beauty { gap: 7px; margin-left: auto; }
.beauty .caret { margin-left: 5px; border-bottom-color: #666; }
.views { display: flex; align-items: center; margin-left: 200px; }
.views button { height: 33px; gap: 3px; }
.views .on { width: 32px; justify-content: center; background: #c2c2c2; border-radius: 5px; margin: 0 9px 0 7px; }
.views .on + button { margin-right: 15px; }
.views .play { width: 43px; margin: 0 7px 0 20px; justify-content: center; border-radius: 5px; background: #ff7452; }
.play svg { fill: #fff; stroke: none; }
.views .pct { gap: 7px; margin: 0 15px 0 20px; }
.thick { stroke: #39415c; stroke-width: 3; }
.views input { appearance: none; width: 190px; height: 16px; margin: 0 15px; }
.views input::-webkit-slider-runnable-track { height: 1px; background: #aaa; }
.views input::-webkit-slider-thumb { appearance: none; width: 17px; height: 17px; margin-top: -8px; border: 2px solid #555; border-radius: 50%; background: #f3f3f3; }
.views .fit { margin: 0 19px; }

/* site mark over the lower right corner */
.watermark { position: absolute; right: 102px; bottom: 30px; stroke: none; pointer-events: none; }
.wm { fill: #fff; fill-opacity: .8; stroke: #bbb; stroke-width: 2; stroke-opacity: .7; paint-order: stroke; }
.bai { font: 800 80px Inter, sans-serif; }
.du { font: 700 50px Inter, sans-serif; }
.jy { font: 700 61px "Noto Sans CJK SC", sans-serif; }
.url { font: 500 40px "Noto Sans", sans-serif; }
```
